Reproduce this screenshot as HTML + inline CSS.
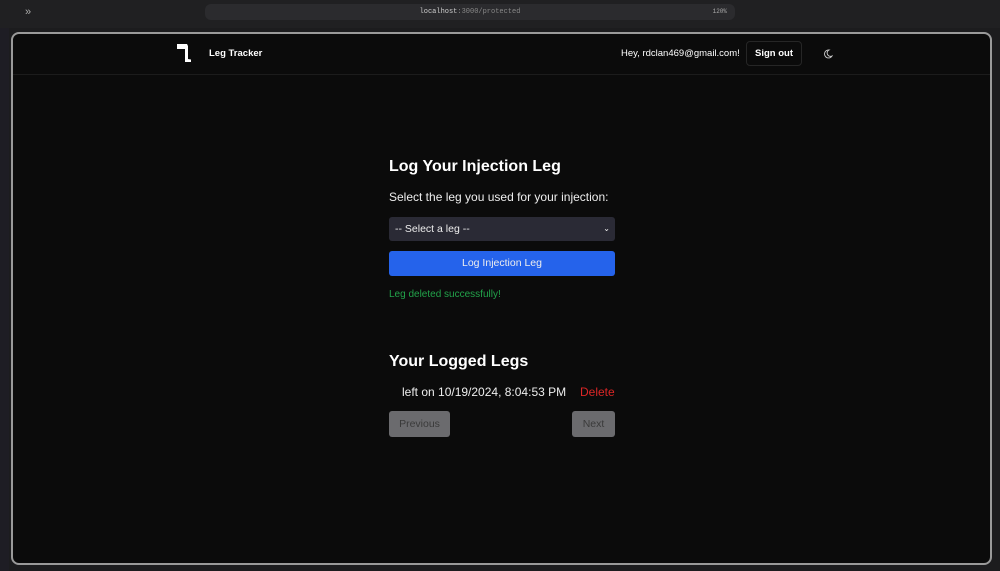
<!DOCTYPE html>
<html><head><style>
*{box-sizing:border-box;margin:0;padding:0}
body{width:1000px;height:571px;background:#1c1c1e;font-family:"Liberation Sans",sans-serif;position:relative;overflow:hidden;color:#fff}
.top{position:absolute;left:0;top:0;width:1000px;height:28px;background:#202022}
.url{position:absolute;left:205px;top:4px;width:530px;height:16px;background:#2b2b2e;border-radius:6px;font-family:"Liberation Mono",monospace;font-size:7px;color:#ccc;text-align:center;line-height:16px}
.url span{color:#888}
.side{position:absolute;left:0;top:28px;width:9px;height:543px;background:#1e1d24}
.win{position:absolute;left:11px;top:32px;width:981px;height:533px;background:#0b0b0b;border:2px solid #9a9a9a;border-radius:8px;overflow:hidden}
.nav{position:absolute;left:0;top:0;width:100%;height:41px;border-bottom:1px solid #1c1c1c}
.abs{position:absolute}
.btn{position:absolute;border-radius:3px;font-size:10.5px;text-align:center}
</style></head><body>
<div class="top"><div class="abs" style="left:25px;top:6px;color:#aaa;font-size:11px">»</div>
<div class="url">localhost<span>:3000/protected</span><span style="position:absolute;right:8px;color:#aaa;font-size:6px">120%</span></div></div>
<div class="side"></div>
<div class="win">
<div class="nav">
<svg class="abs" style="left:163px;top:9px" width="20" height="20" viewBox="0 0 20 20"><path d="M1 1h10l1 2v13l3 .5v2.5h-6V6H1z" fill="#fff"/></svg>
<div class="abs" style="left:196px;top:14px;font-size:9.5px;font-weight:bold">Leg Tracker</div>
<div class="abs" style="left:608px;top:14px;font-size:9.5px">Hey, rdclan469@gmail.com!</div>
<div class="btn" style="left:733px;top:7px;width:56px;height:25px;border:1px solid #262626;line-height:23px;font-size:9.5px;font-weight:bold;border-radius:4px">Sign out</div>
<svg class="abs" style="left:810px;top:15px" width="10" height="10" viewBox="0 0 10 10"><path d="M6 1A4 4 0 1 0 9 7 3.2 3.2 0 0 1 6 1z" fill="none" stroke="#ccc" stroke-width=".9"/></svg>
</div>
<div class="abs" style="left:376px;top:124px;font-size:16px;font-weight:bold">Log Your Injection Leg</div>
<div class="abs" style="left:376px;top:156px;font-size:12px;color:#eee">Select the leg you used for your injection:</div>
<div class="btn" style="left:376px;top:183px;width:226px;height:24px;background:#2a2a35;text-align:left;padding-left:6px;line-height:24px;color:#eee">-- Select a leg --<span style="position:absolute;right:5px;font-size:8px">⌄</span></div>
<div class="btn" style="left:376px;top:217px;width:226px;height:25px;background:#2563eb;line-height:25px;color:#eee">Log Injection Leg</div>
<div class="abs" style="left:376px;top:255px;font-size:10px;color:#22a34a">Leg deleted successfully!</div>
<div class="abs" style="left:376px;top:319px;font-size:16px;font-weight:bold">Your Logged Legs</div>
<div class="abs" style="left:389px;top:351px;font-size:12px;color:#eee">left on 10/19/2024, 8:04:53 PM</div>
<div class="abs" style="left:567px;top:351px;font-size:12px;color:#dc2626">Delete</div>
<div class="btn" style="left:376px;top:377px;width:61px;height:26px;background:#6b6b6e;line-height:26px;color:#3a3a3a">Previous</div>
<div class="btn" style="left:559px;top:377px;width:43px;height:26px;background:#6b6b6e;line-height:26px;color:#3a3a3a">Next</div>
</div>
</body></html>
